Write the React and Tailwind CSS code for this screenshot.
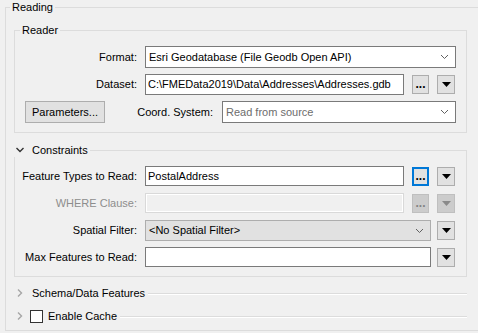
import React from 'react';

// Reader settings panel (FME style)
const font = "[font-family:'Liberation_Sans',Arial,sans-serif]";

const ComboChevron = ({ color = '#606060' }) => (
  <svg width="9" height="6" viewBox="0 0 9 6" className="shrink-0">
    <polyline points="1,1 4.5,4.5 8,1" fill="none" stroke={color} strokeWidth="1" />
  </svg>
);

const DotsButton = ({ focused = false, disabled = false }) => {
  let cls = 'border-[#adadad] bg-[#e1e1e1] text-black';
  if (focused) cls = 'border-2 border-[#0078d7] bg-[#e1e1e1] text-black';
  if (disabled) cls = 'border-[#bfbfbf] bg-[#cccccc] text-[#838383]';
  return (
    <div className={`ml-[8px] w-[17px] h-[19px] border flex items-center justify-center text-[12px] font-bold leading-[12px] ${cls}`}>
      <span className="block -mt-px">...</span>
    </div>
  );
};

const ArrowButton = ({ disabled = false, className = 'ml-[8px]' }) => (
  <div
    className={`${className} w-[18px] h-[19px] border flex items-center justify-center ${
      disabled ? 'border-[#bfbfbf] bg-[#cccccc]' : 'border-[#adadad] bg-[#e1e1e1]'
    }`}
  >
    <svg width="9" height="5" viewBox="0 0 9 5">
      <polygon points="0,0 9,0 4.5,5" fill={disabled ? '#8a8a8a' : '#000'} />
    </svg>
  </div>
);

const Label = ({ children, disabled = false }) => (
  <div className={`w-[123px] text-right pr-px ${disabled ? 'text-[#8d8d8d]' : 'text-black'}`}>{children}</div>
);

const SectionHeader = ({ open, children, checkbox = false }) => (
  <div className="flex items-center h-[14px]">
    {open ? (
      <svg width="10" height="10" viewBox="0 0 10 10" className="ml-px mr-[7px] shrink-0">
        <polyline points="1.5,3 5,6.5 8.5,3" fill="none" stroke="#333" strokeWidth="1.4" />
      </svg>
    ) : (
      <svg width="10" height="10" viewBox="0 0 10 10" className="ml-px mr-[7px] shrink-0">
        <polyline points="3,1.5 6.5,5 3,8.5" fill="none" stroke="#a6a6a6" strokeWidth="1.4" />
      </svg>
    )}
    {checkbox && (
      <div className="-ml-[2px] mr-[5px] w-[13px] h-[13px] border border-[#333333] bg-white shrink-0" />
    )}
    <span className="text-black whitespace-nowrap">{children}</span>
    {open ? (
      <div className="flex-1 self-end ml-[2px] h-[7px] border-t border-r border-[#dcdcdc]" />
    ) : (
      <div className="flex-1 ml-[3px] mt-px h-[2px] border-t border-b border-t-[#dcdcdc] border-b-white" />
    )}
  </div>
);

export default function App() {
  return (
    <div className={`w-[478px] h-[333px] bg-[#f0f0f0] overflow-hidden text-[11px] ${font}`}>
      <fieldset className="ml-[5px] w-[476px] border border-[#dcdcdc] pb-[7px]">
        <legend className="ml-[4px] px-[2px] leading-[14px] text-black">Reading</legend>

        {/* Reader */}
        <fieldset className="mt-[9px] ml-[8px] w-[453px] border border-[#dcdcdc] pt-[9px] pb-[9px]">
          <legend className="ml-[5px] px-[2px] leading-[14px] text-black">Reader</legend>

          <div className="flex items-center gap-[7px]">
            <Label>Format:</Label>
            <div className="w-[311px] h-[22px] border border-[#7a7a7a] bg-white flex items-center pl-[3px] pr-[6px]">
              <span className="flex-1 truncate text-black">Esri Geodatabase (File Geodb Open API)</span>
              <ComboChevron />
            </div>
          </div>

          <div className="mt-[6px] flex items-center gap-[7px]">
            <Label>Dataset:</Label>
            <div className="flex items-center">
              <div className="w-[259px] h-[21px] border border-[#7a7a7a] bg-white flex items-center pl-[2px]">
                <span className="truncate text-black">C:\FMEData2019\Data\Addresses\Addresses.gdb</span>
              </div>
              <DotsButton />
              <ArrowButton />
            </div>
          </div>

          <div className="mt-[6px] flex items-center">
            <div className="ml-[10px] w-[80px] h-[22px] border border-[#adadad] bg-[#e1e1e1] flex items-center justify-center text-black">
              Parameters...
            </div>
            <div className="flex-1" />
            <span className="text-black mr-[9px]">Coord. System:</span>
            <div className="mr-[10px] w-[234px] h-[22px] border border-[#7a7a7a] bg-white flex items-center pl-[3px] pr-[6px]">
              <span className="flex-1 truncate text-[#6d6d6d]">Read from source</span>
              <ComboChevron />
            </div>
          </div>
        </fieldset>

        {/* Constraints */}
        <div className="mt-[10px] ml-[8px] w-[453px]">
          <SectionHeader open>Constraints</SectionHeader>
          <div className="border-l border-r border-b border-[#dcdcdc] pt-[9px] pb-[9px]">
            <div className="flex items-center gap-[7px]">
              <Label>Feature Types to Read:</Label>
              <div className="flex items-center">
                <div className="w-[259px] h-[20px] border border-[#7a7a7a] bg-white flex items-center pl-[2px]">
                  <span className="text-black">PostalAddress</span>
                </div>
                <DotsButton focused />
                <ArrowButton />
              </div>
            </div>

            <div className="mt-[7px] flex items-center gap-[7px]">
              <Label disabled>WHERE Clause:</Label>
              <div className="flex items-center">
                <div className="w-[259px] h-[20px] border border-[#d9d9d9] bg-[#f0f0f0] shadow-[inset_0_0_0_1px_#ffffff]" />
                <DotsButton disabled />
                <ArrowButton disabled />
              </div>
            </div>

            <div className="mt-[7px] flex items-center gap-[7px]">
              <Label>Spatial Filter:</Label>
              <div className="flex items-center">
                <div className="w-[286px] h-[21px] border border-[#adadad] bg-[#e1e1e1] flex items-center pl-[3px] pr-[6px]">
                  <span className="flex-1 text-black">&lt;No Spatial Filter&gt;</span>
                  <ComboChevron />
                </div>
                <ArrowButton className="ml-[6px]" />
              </div>
            </div>

            <div className="mt-[6px] flex items-center gap-[7px]">
              <Label>Max Features to Read:</Label>
              <div className="flex items-center">
                <div className="w-[286px] h-[20px] border border-[#7a7a7a] bg-white" />
                <ArrowButton className="ml-[6px]" />
              </div>
            </div>
          </div>
        </div>

        {/* Collapsed sections */}
        <div className="mt-[9px] ml-[8px] w-[453px]">
          <SectionHeader open={false}>Schema/Data Features</SectionHeader>
        </div>
        <div className="mt-[9px] ml-[8px] w-[453px]">
          <SectionHeader open={false} checkbox>Enable Cache</SectionHeader>
        </div>
      </fieldset>
    </div>
  );
}
